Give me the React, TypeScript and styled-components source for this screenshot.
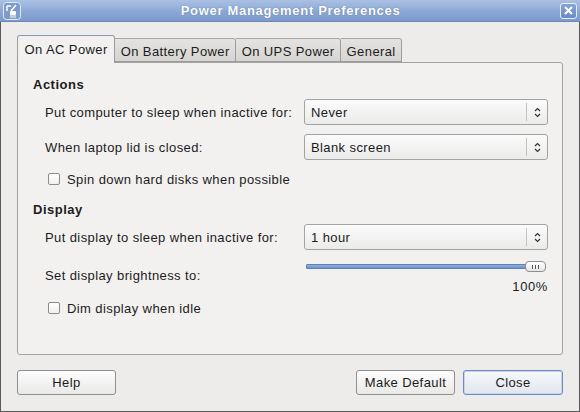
import React from "react";
import styled, { createGlobalStyle } from "styled-components";

const Global = createGlobalStyle`
  html, body { margin: 0; padding: 0; background: #edecea; }
  body {
    font-family: "Liberation Sans", Arial, sans-serif;
    font-size: 13px;
    letter-spacing: 0.4px;
    line-height: 15px;
    color: #1c1c1c;
  }
  * { box-sizing: border-box; }
`;

const Window = styled.div`
  width: 580px;
  height: 412px;
  display: flex;
  flex-direction: column;
  background: #edecea;
  border: 1px solid #5a5a5a;
  border-top: none;
`;

const TitleBar = styled.div`
  height: 22px;
  flex-shrink: 0;
  margin: 0 -1px;
  display: flex;
  align-items: center;
  padding: 0 3px 0 3px;
  background: linear-gradient(#abc1e3, #8aa7d5 55%, #7c9bcd);
  border-bottom: 1px solid #6b87b5;
`;

const TitleText = styled.div`
  flex: 1;
  text-align: center;
  color: #fff;
  font-weight: bold;
  font-size: 13px;
  letter-spacing: 0.7px;
  text-shadow: 0 0 1px rgba(40, 60, 100, 0.6);
`;

const CloseBtn = styled.div`
  width: 17px;
  height: 16px;
  border: 1px solid #e6eefa;
  border-radius: 3px;
  background: linear-gradient(#86a4d4, #6b8bc4);
  display: flex;
  align-items: center;
  justify-content: center;
`;

const Body = styled.div`
  flex: 1;
  display: flex;
  flex-direction: column;
  padding: 13px 16px 0 16px;
`;

const TabRow = styled.div`
  display: flex;
  align-items: flex-end;
  height: 27px;
  position: relative;
  z-index: 1;
`;

const Tab = styled.div<{ $active?: boolean }>`
  height: ${(p) => (p.$active ? "28px" : "24px")};
  padding: ${(p) => (p.$active ? "0 6.5px 0 6.5px" : "2px 5.5px 0 5.5px")};
  display: flex;
  align-items: center;
  border: 1px solid #9c9c9c;
  border-bottom: ${(p) => (p.$active ? "none" : "1px solid #9c9c9c")};
  border-left: ${(p) => (p.$active ? "1px solid #9c9c9c" : "none")};
  border-radius: ${(p) => (p.$active ? "3px 3px 0 0" : "0 3px 0 0")};
  border-top-color: ${(p) => (p.$active ? "#7d9ac8" : "#a8a8a8")};
  background: ${(p) => (p.$active ? "#f2f1f0" : "linear-gradient(#e4e3e1, #d6d5d2)")};
  color: #1c1c1c;
  white-space: nowrap;
  margin-bottom: ${(p) => (p.$active ? "-1px" : "0")};
`;

const Panel = styled.div`
  height: 293px;
  flex-shrink: 0;
  background: #f2f1f0;
  border: 1px solid #a3a3a3;
  border-radius: 0 3px 3px 3px;
  padding: 14px 15px 0 15px;
  display: flex;
  flex-direction: column;
`;

const Heading = styled.div<{ $mt?: number }>`
  font-weight: bold;
  height: 16px;
  line-height: 16px;
  letter-spacing: 0.5px;
  margin-top: ${(p) => p.$mt ?? 0}px;
`;

const Row = styled.div<{ $mt: number }>`
  display: grid;
  grid-template-columns: 259px 244px;
  align-items: center;
  padding-left: 12px;
  height: 26px;
  margin-top: ${(p) => p.$mt}px;
`;

const Combo = styled.div`
  height: 26px;
  border: 1px solid #a3a3a3;
  border-radius: 3px;
  background: linear-gradient(#fbfbfb, #ebebea);
  display: flex;
  align-items: center;
  padding-left: 6px;
`;

const ComboText = styled.div`
  flex: 1;
`;

const ComboArrow = styled.div`
  width: 21px;
  height: 18px;
  border-left: 1px solid #c4c4c4;
  display: flex;
  align-items: center;
  justify-content: center;
`;

const CheckRow = styled.label<{ $mt: number }>`
  display: flex;
  align-items: center;
  gap: 7px;
  padding-left: 15px;
  height: 16px;
  margin-top: ${(p) => p.$mt}px;
`;

const Box = styled.span`
  width: 12px;
  height: 12px;
  border: 1px solid #8c8c8c;
  border-radius: 2px;
  background: linear-gradient(#ffffff, #f0f0f0);
`;

const SliderRow = styled.div`
  display: grid;
  grid-template-columns: 259px 244px;
  padding-left: 12px;
  margin-top: 11px;
`;

const SliderLabel = styled.div`
  padding-top: 7px;
`;

const SliderCol = styled.div`
  display: flex;
  flex-direction: column;
`;

const Track = styled.div`
  position: relative;
  height: 11px;
  display: flex;
  align-items: center;
  padding-left: 2px;
`;

const TrackFill = styled.div`
  height: 5px;
  width: 224px;
  background: linear-gradient(#8fb0de, #6e93cb);
  border: 1px solid #5f7fb3;
  border-radius: 1px;
`;

const Thumb = styled.div`
  position: absolute;
  right: 2px;
  top: 0;
  width: 21px;
  height: 11px;
  border: 1px solid #8e8e8e;
  border-radius: 4px;
  background: linear-gradient(#ffffff, #e6e6e6);
  display: flex;
  align-items: center;
  justify-content: center;
  gap: 2px;
`;

const Grip = styled.span`
  width: 1px;
  height: 4px;
  background: #555;
`;

const Value = styled.div`
  text-align: right;
  margin-top: 7px;
  letter-spacing: 0.6px;
`;

const Buttons = styled.div`
  display: flex;
  align-items: center;
  margin-top: 15px;
`;

const Button = styled.div<{ $default?: boolean; $w: number }>`
  width: ${(p) => p.$w}px;
  height: 25px;
  display: flex;
  align-items: center;
  justify-content: center;
  border: 1px solid ${(p) => (p.$default ? "#6a8cc6" : "#8f8f8f")};
  border-radius: 3px;
  background: ${(p) =>
    p.$default ? "linear-gradient(#f6f8fb, #e1e6ee)" : "linear-gradient(#fdfdfd, #e9e9e8)"};
  box-shadow: ${(p) => (p.$default ? "inset 0 0 0 1px #c9d6ea" : "none")};
`;

const Grow = styled.div`
  flex: 1;
`;

const Gap = styled.div<{ $w: number }>`
  width: ${(p) => p.$w}px;
`;

const Updown = () => (
  <svg width="7" height="11" viewBox="0 0 7 11">
    <path d="M1 4 L3.5 1.5 L6 4 M1 7 L3.5 9.5 L6 7" fill="none" stroke="#333" strokeWidth="1.2" />
  </svg>
);

const AppIcon = () => (
  <svg width="18" height="18" viewBox="0 0 18 18">
    <rect x="0.5" y="0.5" width="17" height="17" rx="3" fill="#7d9bcd" stroke="#e2eaf7" />
    <path d="M4 4 L4 9 M4 4 L8 4" stroke="#fff" strokeWidth="1.5" fill="none" />
    <path d="M13 3 L8 9" stroke="#fff" strokeWidth="1.5" />
    <rect x="7" y="9" width="6" height="4" rx="1" fill="#fff" />
    <path d="M8 13 v3 M10 13 v3 M12 13 v3" stroke="#fff" strokeWidth="1" />
  </svg>
);

export default function App() {
  return (
    <>
      <Global />
      <Window>
        <TitleBar>
          <AppIcon />
          <TitleText>Power Management Preferences</TitleText>
          <CloseBtn>
            <svg width="9" height="9" viewBox="0 0 9 9">
              <path d="M1 1 L8 8 M8 1 L1 8" stroke="#fff" strokeWidth="2" />
            </svg>
          </CloseBtn>
        </TitleBar>
        <Body>
          <TabRow>
            <Tab $active>On AC Power</Tab>
            <Tab>On Battery Power</Tab>
            <Tab>On UPS Power</Tab>
            <Tab>General</Tab>
          </TabRow>
          <Panel>
            <Heading>Actions</Heading>
            <Row $mt={6}>
              <span>Put computer to sleep when inactive for:</span>
              <Combo>
                <ComboText>Never</ComboText>
                <ComboArrow><Updown /></ComboArrow>
              </Combo>
            </Row>
            <Row $mt={9}>
              <span>When laptop lid is closed:</span>
              <Combo>
                <ComboText>Blank screen</ComboText>
                <ComboArrow><Updown /></ComboArrow>
              </Combo>
            </Row>
            <CheckRow $mt={11}>
              <Box />
              <span>Spin down hard disks when possible</span>
            </CheckRow>
            <Heading $mt={15}>Display</Heading>
            <Row $mt={6}>
              <span>Put display to sleep when inactive for:</span>
              <Combo>
                <ComboText>1 hour</ComboText>
                <ComboArrow><Updown /></ComboArrow>
              </Combo>
            </Row>
            <SliderRow>
              <SliderLabel>Set display brightness to:</SliderLabel>
              <SliderCol>
                <Track>
                  <TrackFill />
                  <Thumb>
                    <Grip />
                    <Grip />
                    <Grip />
                  </Thumb>
                </Track>
                <Value>100%</Value>
              </SliderCol>
            </SliderRow>
            <CheckRow $mt={6}>
              <Box />
              <span>Dim display when idle</span>
            </CheckRow>
          </Panel>
          <Buttons>
            <Button $w={99}>Help</Button>
            <Grow />
            <Button $w={99}>Make Default</Button>
            <Gap $w={8} />
            <Button $w={100} $default>Close</Button>
          </Buttons>
        </Body>
      </Window>
    </>
  );
}
